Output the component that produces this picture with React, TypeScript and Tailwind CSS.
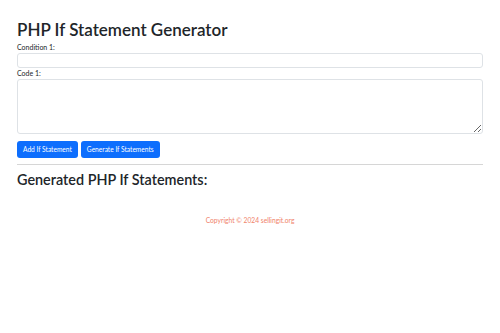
import React from "react";

export default function App() {
  return (
    <div
      className="min-h-[333px] bg-white text-[#212529]"
      style={{ fontFamily: 'Lato, "Noto Sans", sans-serif' }}
    >
      <div className="px-[17px] pt-[19px]">
        {/* Title */}
        <h1 className="text-[17px] leading-[22px] font-semibold mb-[2px]">
          PHP If Statement Generator
        </h1>

        {/* Condition */}
        <label className="block text-[7px] leading-[9px] mb-[1px]">
          Condition 1:
        </label>
        <input
          type="text"
          className="block w-full h-[15px] rounded-[3px] border border-[#dee2e6] mb-[1px]"
        />

        {/* Code */}
        <label className="block text-[7px] leading-[9px] mb-[1px]">
          Code 1:
        </label>
        <textarea className="block w-full h-[55px] rounded-[3px] border border-[#dee2e6]" />

        {/* Buttons */}
        <div className="flex gap-[3px] mt-[7px]">
          <button className="h-[17px] px-[6px] rounded-[3px] bg-[#0d6efd] text-white text-[6.6px] leading-none">
            Add If Statement
          </button>
          <button className="h-[17px] px-[6px] rounded-[3px] bg-[#0d6efd] text-white text-[6.6px] leading-none">
            Generate If Statements
          </button>
        </div>

        <hr className="mt-[6px] border-t border-[#d6d6d6]" />

        <h2 className="text-[14.4px] leading-[18px] font-semibold mt-[6px]">
          Generated PHP If Statements:
        </h2>

        <p className="text-center text-[6.7px] text-[#f0826a] mt-[26px]">
          Copyright © 2024 sellingit.org
        </p>
      </div>
    </div>
  );
}
